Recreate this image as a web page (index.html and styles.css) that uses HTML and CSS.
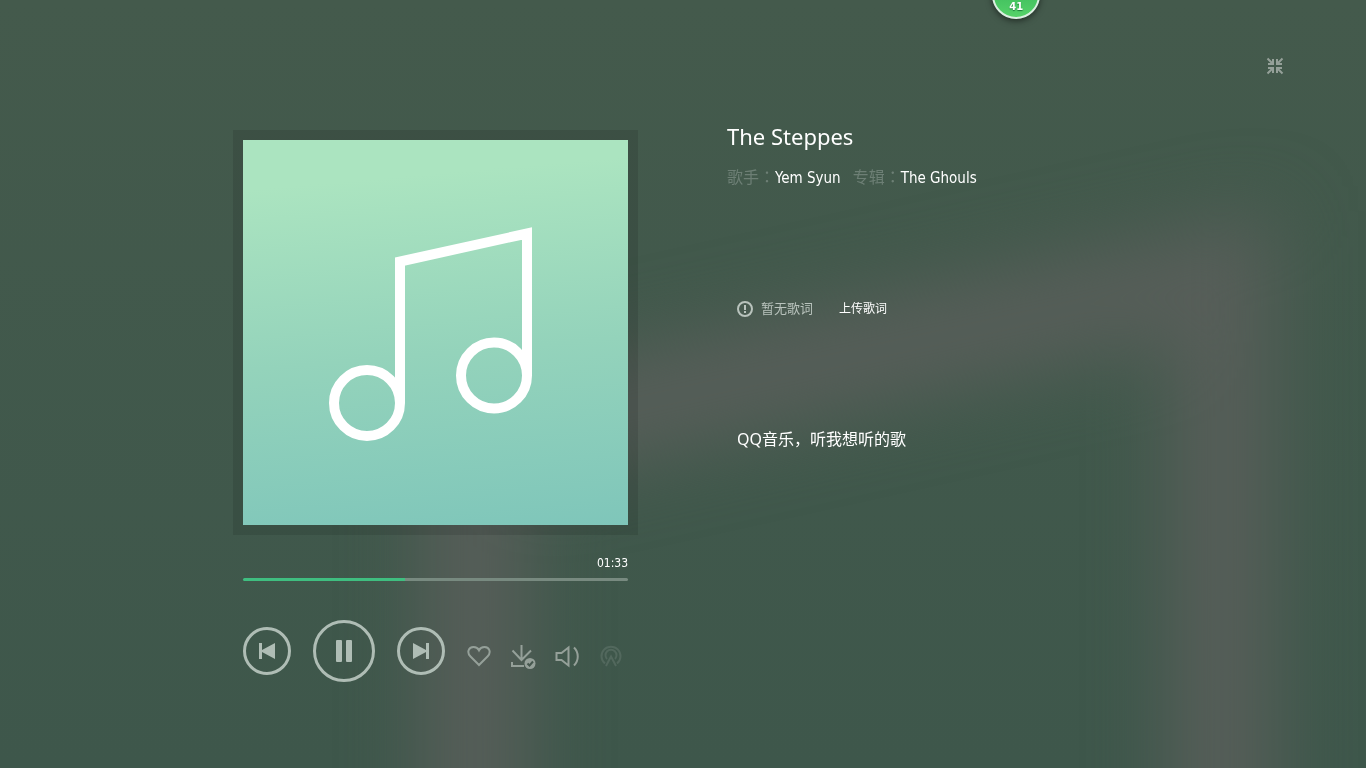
FILE: index.html
```html
<!DOCTYPE html>
<html lang="zh-CN">
<head>
    <meta charset="UTF-8">
    <title>The Steppes - Yem Syun</title>
    <link rel="stylesheet" href="styles.css">
</head>
<body>
    <svg class="backdrop" viewBox="0 0 1366 768" preserveAspectRatio="xMidYMid slice" aria-hidden="true">
        <defs>
            <filter id="soft" x="-30%" y="-30%" width="160%" height="160%" color-interpolation-filters="sRGB">
                <feGaussianBlur stdDeviation="38"/>
            </filter>
        </defs>
        <path d="M475 1000V440L1222 275V1000" fill="none" stroke="#575e59" stroke-width="105" filter="url(#soft)"/>
    </svg>

    <header class="topbar">
        <span class="badge">41</span>
        <button class="icon-btn shrink" type="button" aria-label="退出全屏">
            <svg width="18" height="18" viewBox="0 0 18 18">
                <path d="M1.500 1.500L6 6M16.500 1.500L12 6M1.500 16.500L6 12M16.500 16.500L12 12" stroke="currentColor" stroke-width="2"/>
                <path d="M8 2v6H2V6h3l1-1V2zM10 2v6h6V6h-3l-1-1V2zM8 16v-6H2v2h3l1 1v3zM10 16v-6h6v2h-3l-1 1v3z" fill="currentColor"/>
            </svg>
        </button>
    </header>

    <main class="player">
        <section class="left">
            <div class="cover">
                <svg viewBox="0 0 385 385" role="img" aria-label="专辑封面">
                    <g fill="none" stroke="#fff" stroke-width="10">
                        <circle cx="124" cy="263" r="33"/>
                        <circle cx="251" cy="235.500" r="33"/>
                        <path d="M157 263V121.500L284 93.500V235"/>
                    </g>
                </svg>
            </div>

            <div class="progress">
                <time class="time">01:33</time>
                <input class="bar" type="range" min="0" max="100" value="42" style="--pos: 42%" aria-label="播放进度">
            </div>

            <div class="controls">
                <button class="round" type="button" aria-label="上一首">
                    <svg width="18" height="18" viewBox="0 0 18 18" fill="currentColor"><path d="M1 1h3v7L17 1v16L4 10v7H1z"/></svg>
                </button>
                <button class="round big" type="button" aria-label="暂停">
                    <svg width="18" height="22" viewBox="0 0 18 22" fill="currentColor"><rect x="1" width="6" height="22" rx="1"/><rect x="11" width="6" height="22" rx="1"/></svg>
                </button>
                <button class="round" type="button" aria-label="下一首">
                    <svg width="18" height="18" viewBox="0 0 18 18" fill="currentColor"><path d="M17 1h-3v7L1 1v16l13-7v7h3z"/></svg>
                </button>
                <div class="tools">
                    <button class="icon-btn" type="button" aria-label="喜欢">
                        <svg width="26" height="26" viewBox="0 0 26 26" fill="none" stroke="currentColor" stroke-width="2">
                            <path d="M12 22L3.500 13.500C-.5 9.500 1.500 4 6.500 4C9 4 11 5.200 12 7.200C13 5.200 15 4 17.500 4C22.500 4 24.500 9.500 20.500 13.500Z"/>
                        </svg>
                    </button>
                    <button class="icon-btn" type="button" aria-label="下载">
                        <svg width="26" height="26" viewBox="0 0 26 26" fill="none" stroke="currentColor" stroke-width="2">
                            <path d="M10.500 2v15M1.500 7.500L10.500 17L20 7.500M1 19v4h12"/>
                            <circle cx="19" cy="20.500" r="5.500" fill="currentColor" stroke="none"/>
                            <path class="tick" d="M16.500 20.500l2 2l3.500-4"/>
                        </svg>
                    </button>
                    <button class="icon-btn" type="button" aria-label="音量">
                        <svg width="26" height="26" viewBox="0 0 26 26" fill="none" stroke="currentColor" stroke-width="2">
                            <path d="M1.500 10h5l7-5.500v18l-7-5.500h-5zM19 4.500c5 5 5 13 0 18"/>
                        </svg>
                    </button>
                    <button class="icon-btn faint" type="button" aria-label="电台" disabled>
                        <svg width="26" height="26" viewBox="0 0 26 26" fill="none" stroke="currentColor" stroke-width="2">
                            <path d="M6 20.500A9.500 9.500 0 1 1 18 20.500M8 16a5.500 5.500 0 1 1 8 0M7 23l5-9.500L17 23"/>
                        </svg>
                    </button>
                </div>
            </div>
        </section>

        <section class="info">
            <h1 class="title">The Steppes</h1>
            <p class="meta">
                <span>歌手<span class="punct" lang="zh-TW">：</span><a href="#">Yem Syun</a></span>
                <span>专辑<span class="punct" lang="zh-TW">：</span><a href="#">The Ghouls</a></span>
            </p>
            <div class="lyrics">
                <div class="empty">
                    <svg width="16" height="16" viewBox="0 0 16 16" fill="none" stroke="currentColor" stroke-width="2">
                        <circle cx="8" cy="8" r="7"/>
                        <path d="M8 4v5M8 10v2"/>
                    </svg>
                    <span>暂无歌词</span>
                    <a class="upload" href="#">上传歌词</a>
                </div>
                <p class="slogan">QQ音乐，听我想听的歌</p>
            </div>
        </section>
    </main>
</body>
</html>
```

FILE: styles.css
```css
* {
    box-sizing: border-box;
}

body {
    margin: 0;
    min-height: 100vh;
    background: linear-gradient(#445a4c, #3e574b);
    color: #fff;
    font-family: "DejaVu Sans Condensed", "Noto Sans CJK SC", sans-serif;
}

a {
    color: #fff;
    text-decoration: none;
}

a:hover {
    color: #31c27c;
}

button {
    padding: 0;
    border: 0;
    background: none;
    cursor: pointer;
}

svg {
    display: block;
}

.punct {
    font-family: "Noto Sans CJK TC", sans-serif;
}

.backdrop {
    position: fixed;
    inset: 0;
    z-index: -1;
    width: 100%;
    height: 100%;
}

/* top bar */
.topbar {
    display: flex;
    justify-content: flex-end;
    height: 120px;
    padding: 57px 82px 0;
}

.badge {
    position: absolute;
    top: -29px;
    left: 74.4%;
    width: 48px;
    height: 48px;
    margin-left: -24px;
    padding-top: 27px;
    border: 2px solid #dcefe2;
    border-radius: 50%;
    background: linear-gradient(#2fae55, #55d269);
    box-shadow: 0 2px 6px rgba(0, 0, 0, 0.5);
    font-family: "DejaVu Sans", sans-serif;
    font-size: 10px;
    font-weight: bold;
    line-height: 14px;
    text-align: center;
    text-shadow: 0 1px 1px #1c7a3a;
}

.icon-btn {
    color: #95a099;
}

.faint {
    color: #52685d;
}

.tick {
    stroke: #46574e;
}

.shrink {
    height: 18px;
}

/* player */
.player {
    display: flex;
    gap: 89px;
    max-width: 900px;
    margin: 0 auto;
}

.left {
    flex: none;
    width: 405px;
    padding-top: 10px;
}

.cover {
    padding: 10px;
    background: rgba(0, 0, 0, 0.1);
}

.cover svg {
    background: linear-gradient(175deg, #abe4c0 12%, #94d3bb 55%, #7fc6ba);
}

.progress {
    display: flex;
    flex-direction: column;
    align-items: flex-end;
    gap: 7px;
    padding: 20px 10px 0;
}

.time {
    font-size: 12px;
    line-height: 16px;
}

.bar {
    appearance: none;
    width: 100%;
    height: 3px;
    margin: 0;
    border-radius: 2px;
    background: linear-gradient(to right, #3fbe80 var(--pos), #788a80 var(--pos));
    cursor: pointer;
}

.bar::-webkit-slider-thumb {
    appearance: none;
    width: 0;
    height: 3px;
}

.controls {
    display: flex;
    align-items: center;
    gap: 22px;
    padding: 39px 10px 0;
}

.round {
    display: grid;
    place-items: center;
    flex: none;
    width: 48px;
    height: 48px;
    border: 3px solid #afbdb5;
    border-radius: 50%;
    color: #afbdb5;
}

.big {
    width: 62px;
    height: 62px;
}

.tools {
    display: flex;
    gap: 18px;
    padding-top: 10px;
}

/* song info */
.info {
    flex: 1;
}

.title {
    margin: 0;
    font-family: "Noto Sans", "Noto Sans CJK SC", sans-serif;
    font-size: 22px;
    font-weight: normal;
    line-height: 32px;
}

.meta {
    display: flex;
    gap: 12px;
    margin: 12px 0 0;
    color: #6d7f75;
    font-size: 16px;
    line-height: 24px;
}

.meta a {
    font-size: 15px;
}

.lyrics {
    padding: 107px 10px 0;
}

.empty {
    display: flex;
    align-items: center;
    gap: 8px;
    color: #b9c3bd;
    font-size: 13px;
    line-height: 24px;
}

.upload {
    margin-left: 18px;
    font-size: 12px;
}

.slogan {
    margin: 106px 0 0;
    font-family: "Noto Sans", "Noto Sans CJK SC", sans-serif;
    font-size: 16px;
    line-height: 24px;
}
```
